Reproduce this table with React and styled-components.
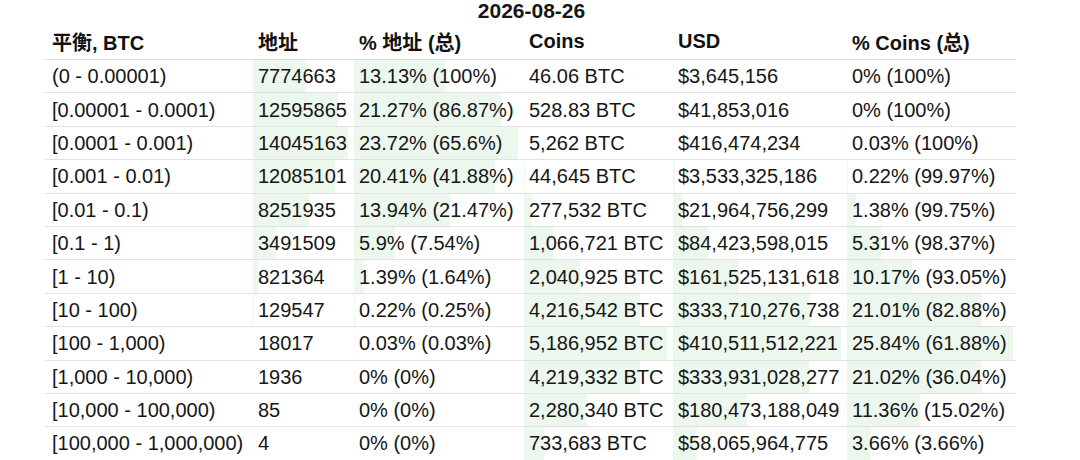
import React from 'react';
import styled, { createGlobalStyle } from 'styled-components';

const GlobalStyle = createGlobalStyle`
  body {
    margin: 0;
    background: #fff;
    font-family: "Liberation Sans", "Noto Sans CJK SC", Arial, sans-serif;
    color: #161616;
  }
`;

const Page = styled.div`
  width: 1080px;
  height: 460px;
  overflow: hidden;
  padding-left: 45px;
  box-sizing: border-box;
`;

const Wrap = styled.div`
  width: 971px;
`;

const Title = styled.div`
  font-size: 21px;
  line-height: 22px;
  font-weight: 700;
  text-align: center;
  height: 24px;
  padding-left: 2px;
`;

const Table = styled.table`
  width: 971px;
  table-layout: fixed;
  border-collapse: collapse;
  font-size: 20px;
  white-space: nowrap;
`;

const Head = styled.th`
  height: 34px;
  padding: 0 0 1px ${(p) => (p.$first ? 7 : 8)}px;
  text-align: left;
  font-weight: 700;
  color: #111;
  border-bottom: 1px solid #dedede;
`;

const Row = styled.tr`
  & + & td {
    border-top: 1px solid #e1e1e1;
  }
`;

const Cell = styled.td`
  height: 32.4px;
  padding: 0 0 0 ${(p) => (p.$first ? 7 : 8)}px;
  line-height: 22px;
  background: ${(p) =>
    p.$fill != null
      ? `linear-gradient(#ecf7ed, #ecf7ed) 3px 0 / calc((100% - 6px) * ${p.$fill}) 100% no-repeat`
      : 'none'};
`;

const rows = [
  ['(0 - 0.00001)', 7774663, '13.13% (100%)', 46.06, '46.06 BTC', 3645156, '$3,645,156', '0% (100%)'],
  ['[0.00001 - 0.0001)', 12595865, '21.27% (86.87%)', 528.83, '528.83 BTC', 41853016, '$41,853,016', '0% (100%)'],
  ['[0.0001 - 0.001)', 14045163, '23.72% (65.6%)', 5262, '5,262 BTC', 416474234, '$416,474,234', '0.03% (100%)'],
  ['[0.001 - 0.01)', 12085101, '20.41% (41.88%)', 44645, '44,645 BTC', 3533325186, '$3,533,325,186', '0.22% (99.97%)'],
  ['[0.01 - 0.1)', 8251935, '13.94% (21.47%)', 277532, '277,532 BTC', 21964756299, '$21,964,756,299', '1.38% (99.75%)'],
  ['[0.1 - 1)', 3491509, '5.9% (7.54%)', 1066721, '1,066,721 BTC', 84423598015, '$84,423,598,015', '5.31% (98.37%)'],
  ['[1 - 10)', 821364, '1.39% (1.64%)', 2040925, '2,040,925 BTC', 161525131618, '$161,525,131,618', '10.17% (93.05%)'],
  ['[10 - 100)', 129547, '0.22% (0.25%)', 4216542, '4,216,542 BTC', 333710276738, '$333,710,276,738', '21.01% (82.88%)'],
  ['[100 - 1,000)', 18017, '0.03% (0.03%)', 5186952, '5,186,952 BTC', 410511512221, '$410,511,512,221', '25.84% (61.88%)'],
  ['[1,000 - 10,000)', 1936, '0% (0%)', 4219332, '4,219,332 BTC', 333931028277, '$333,931,028,277', '21.02% (36.04%)'],
  ['[10,000 - 100,000)', 85, '0% (0%)', 2280340, '2,280,340 BTC', 180473188049, '$180,473,188,049', '11.36% (15.02%)'],
  ['[100,000 - 1,000,000)', 4, '0% (0%)', 733683, '733,683 BTC', 58065964775, '$58,065,964,775', '3.66% (3.66%)'],
];

const pct = (s) => parseFloat(s);
const maxOf = (f) => Math.max(...rows.map(f));
const maxAddr = maxOf((r) => r[1]);
const maxAddrPct = maxOf((r) => pct(r[2]));
const maxCoins = maxOf((r) => r[3]);
const maxUsd = maxOf((r) => r[5]);
const maxCoinPct = maxOf((r) => pct(r[7]));

const widths = [205, 101, 170, 149, 174, 172];

export default function App() {
  return (
    <>
      <GlobalStyle />
      <Page>
        <Wrap>
          <Title>2026-08-26</Title>
          <Table>
            <colgroup>
              {widths.map((w) => (
                <col key={w} style={{ width: w }} />
              ))}
            </colgroup>
            <thead>
              <tr>
                <Head $first>平衡, BTC</Head>
                <Head>地址</Head>
                <Head>% 地址 (总)</Head>
                <Head>Coins</Head>
                <Head>USD</Head>
                <Head>% Coins (总)</Head>
              </tr>
            </thead>
            <tbody>
              {rows.map((r) => (
                <Row key={r[0]}>
                  <Cell $first>{r[0]}</Cell>
                  <Cell $fill={(r[1] / maxAddr).toFixed(3)}>{r[1]}</Cell>
                  <Cell $fill={(pct(r[2]) / maxAddrPct).toFixed(3)}>{r[2]}</Cell>
                  <Cell $fill={(r[3] / maxCoins).toFixed(3)}>{r[4]}</Cell>
                  <Cell $fill={(r[5] / maxUsd).toFixed(3)}>{r[6]}</Cell>
                  <Cell $fill={(pct(r[7]) / maxCoinPct).toFixed(3)}>{r[7]}</Cell>
                </Row>
              ))}
            </tbody>
          </Table>
        </Wrap>
      </Page>
    </>
  );
}
